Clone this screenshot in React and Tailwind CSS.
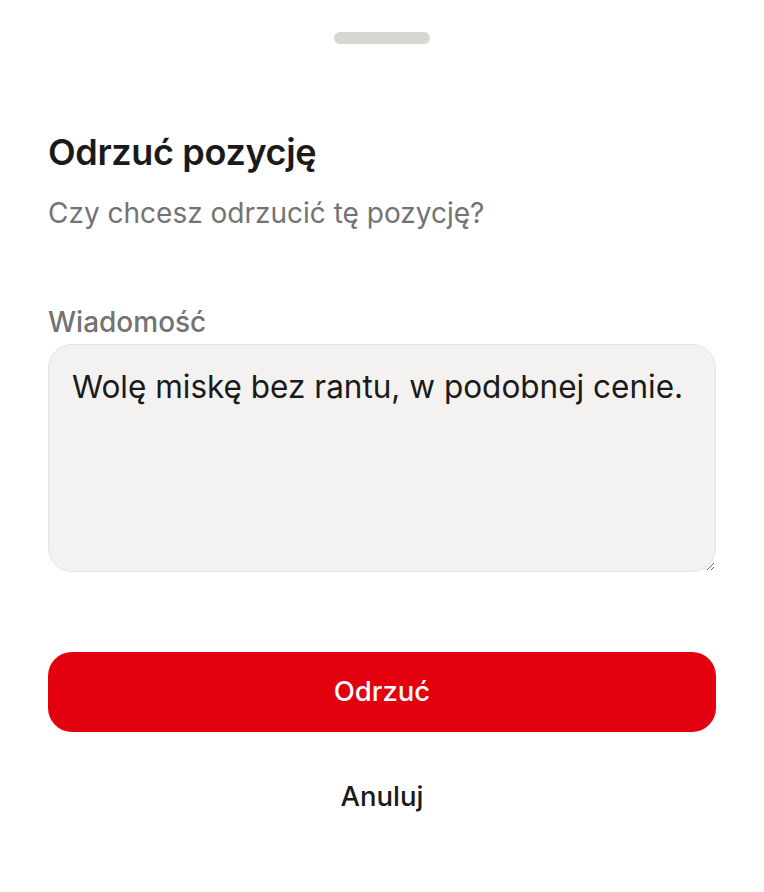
import React from "react";

export default function App() {
    return (
        <div
            className="min-h-[892px] bg-white px-12 pt-8 text-[#1a1a1a]"
            style={{ fontFamily: "Inter, 'Noto Sans', sans-serif" }}
        >
            <div className="mx-auto h-3 w-24 rounded-full bg-[#d8d6d2]" />

            <h1 className="mt-[86px] text-[36px] font-semibold leading-[44px] tracking-[-0.01em]">
                Odrzuć pozycję
            </h1>
            <p className="mt-[21px] text-[28px] leading-[36px] text-[#737373]">
                Czy chcesz odrzucić tę pozycję?
            </p>

            <label className="mt-[73px] block text-[28px] font-medium leading-[36px] text-[#737373]">
                Wiadomość
            </label>
            <textarea
                className="mt-[4px] block h-[228px] w-full rounded-[24px] border border-[#e5e4e1] bg-[#f3f2f0] px-[23px] py-[22px] text-[31.5px] leading-[40px] text-[#1a1a1a] outline-none"
                defaultValue="Wolę miskę bez rantu, w podobnej cenie."
            />

            <button className="mt-[80px] flex h-20 w-full items-center justify-center rounded-[24px] bg-[#e3000f] text-[27.5px] font-medium text-white">
                Odrzuć
            </button>
            <button className="mx-auto mt-[44px] block text-[27.5px] font-medium leading-[40px] text-[#1a1a1a]">
                Anuluj
            </button>
        </div>
    );
}
